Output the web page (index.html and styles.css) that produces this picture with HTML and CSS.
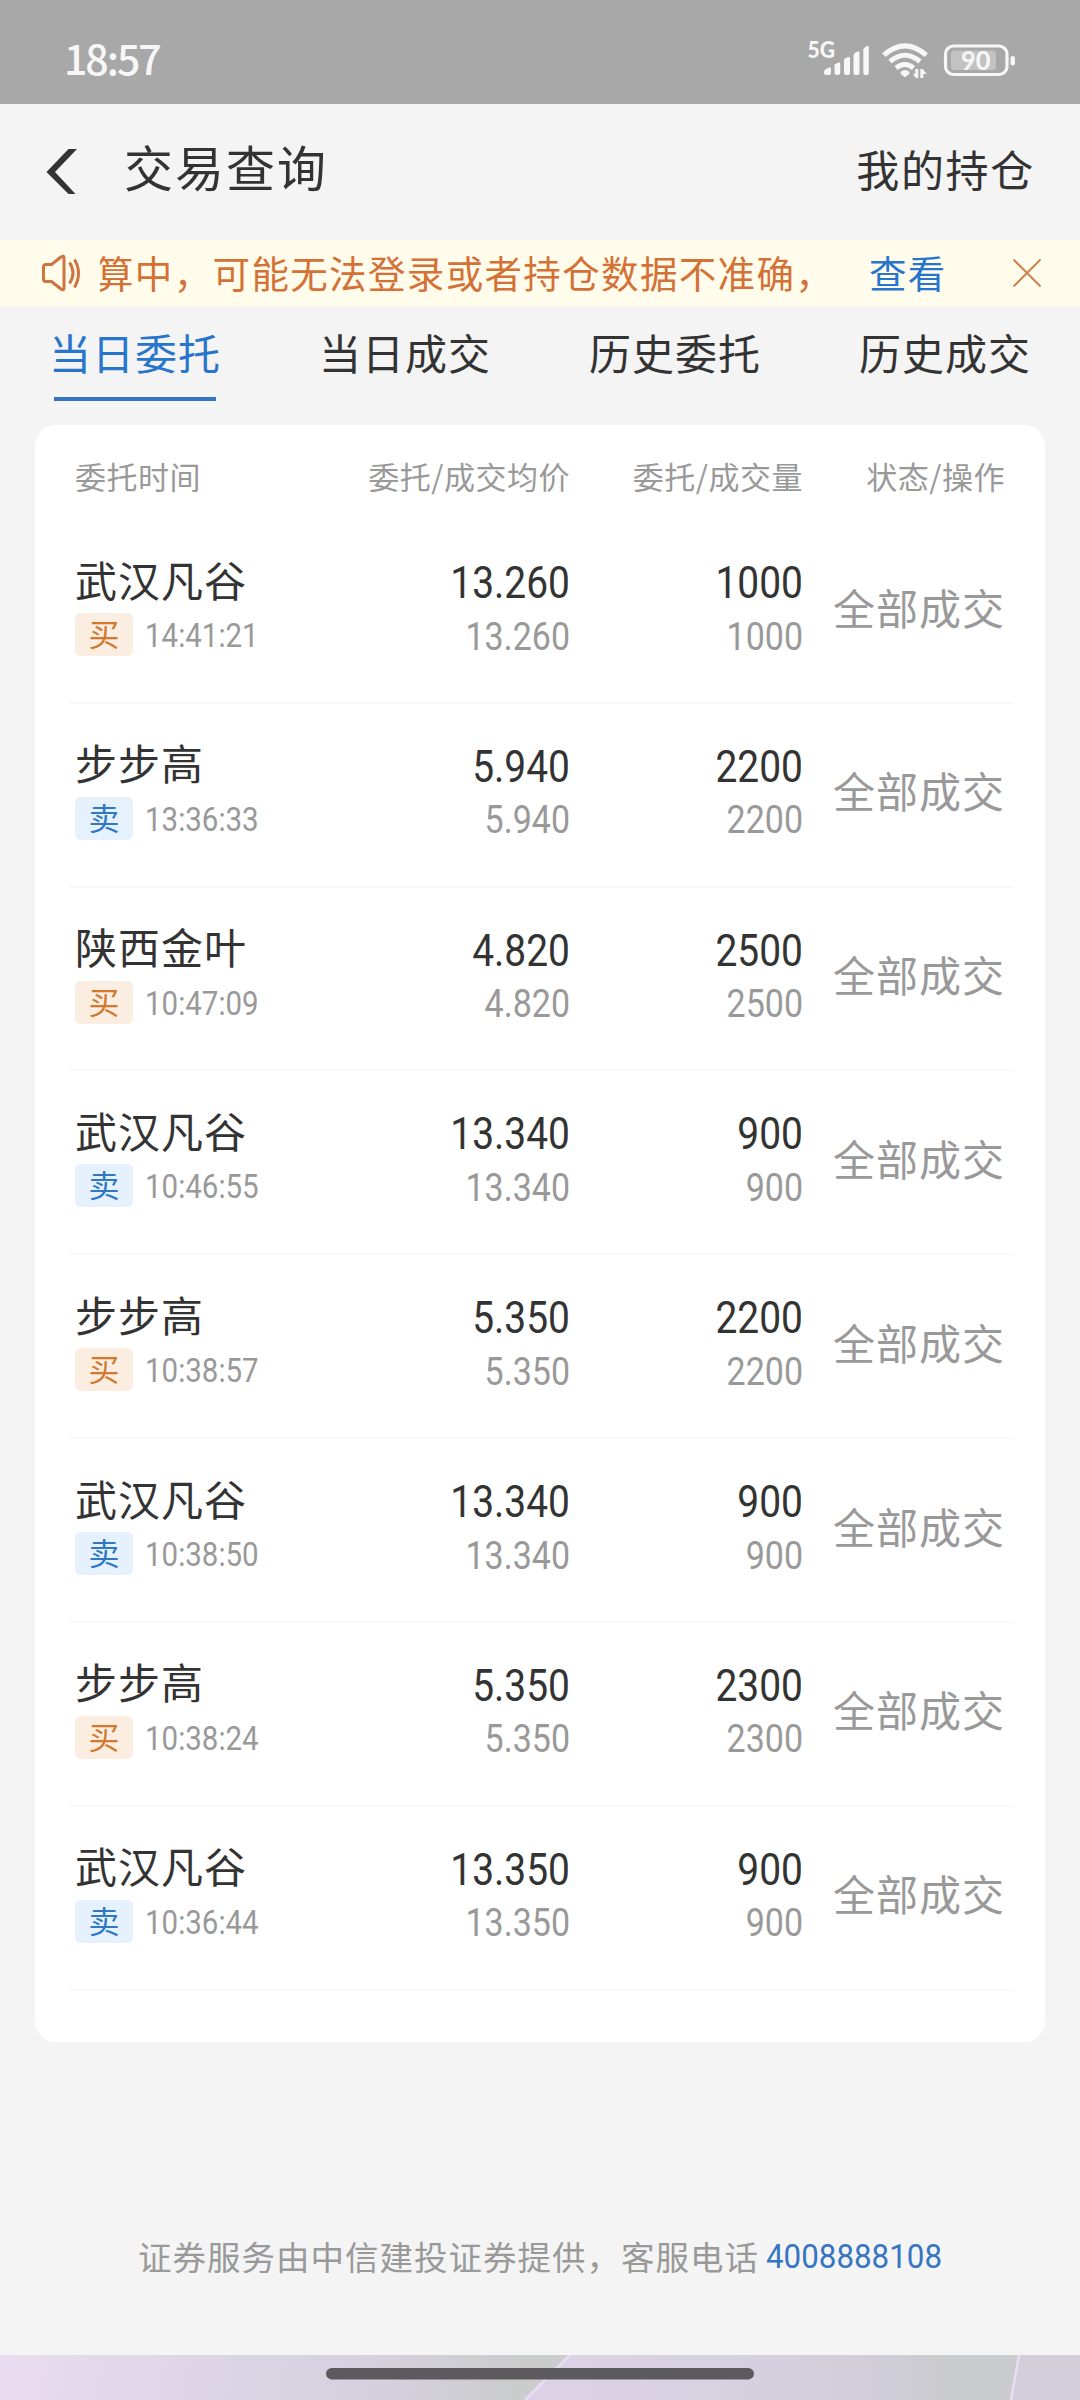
FILE: index.html
```html
<!DOCTYPE html>
<html lang="zh-CN">
<head>
<meta charset="utf-8">
<title>交易查询</title>
<link rel="stylesheet" href="styles.css">
</head>
<body>
<div class="statusbar">
  <span class="clock">18:57</span>
  <svg class="status-icons" width="216" height="50" viewBox="0 0 216 50" fill="#f7f7f7">
    <text class="net" x="1.5" y="22" textLength="27.500" lengthAdjust="spacingAndGlyphs">5G</text>
    <path d="M18 36q0-2 2-3l3-1.500q2-.5 2 1V37q0 2-2 2h-3q-2 0-2-2z"/>
    <path d="M28.500 29.500q0-1.500 2-2l2-1q1.700-.5 1.700 1V37q0 2-2 2h-1.700q-2 0-2-2z"/>
    <path d="M38 24q0-1.500 2-2l2-1q2-.5 2 1V37q0 2-2 2h-2q-2 0-2-2z"/>
    <path d="M47.500 19q0-1.500 2-2.500l2-1q2-.5 2 1V37q0 2-2 2h-2q-2 0-2-2z"/>
    <path d="M57.300 13.500q0-1.500 2-2.500l1.500-1q2-.5 2 1V37q0 2-2 2h-1.500q-2 0-2-2z"/>
    <g fill="none" stroke="#f7f7f7" stroke-width="5">
      <path d="M77.800 19.200q21.200-18.500 42.400 0"/>
      <path d="M84 25.500q15-12.500 30 0"/>
      <path d="M90 32q9-7 17.500 0"/>
    </g>
    <path d="M94.500 36q4.500-4 9 0q.5 2-1.500 3l-3 2.300l-3-2.300q-2-1-1.500-3z"/>
    <path d="M112.300 33v9h-2.500l-3-4.500l2.500.5v-5zM114.300 42v-9h2.500l3.700 5h-3.200v4z"/>
    <rect x="139.500" y="10" width="61.500" height="28.500" rx="8" fill="none" stroke="#f7f7f7" stroke-width="3.200"/>
    <rect x="145" y="14.500" width="45" height="19.500" rx="3" fill="#c2c2c2"/>
    <rect x="204.500" y="20" width="4.500" height="9.500" rx="2.200"/>
    <text class="charge" x="155" y="34" textLength="29.500" lengthAdjust="spacingAndGlyphs">90</text>
  </svg>
</div>
<header class="navbar">
  <svg class="back" width="32" height="46" viewBox="0 0 32 46"><path d="M31 0H22.500L.500 23L22.500 45H29.500L9 23z" fill="#333"/></svg>
  <h1 class="title">交易查询</h1>
  <a class="holdings">我的持仓</a>
</header>
<div class="notice">
  <svg class="speaker" width="42" height="38" viewBox="0 0 42 38" fill="none" stroke="#cd7440" stroke-width="3" stroke-linejoin="round">
    <path d="M3.500 13q0-2.500 2.500-2.500h5.500L21 3q3-2 3 1v30q0 3-3 1L11.500 27.500H6q-2.500 0-2.500-2.500z"/>
    <path d="M29.500 8.500q7 10.500 0 21M34.500 5.500q8 13.500 0 28"/>
  </svg>
  <div class="ticker"><span class="ticker-text">算中，可能无法登录或者持仓数据不准确，</span></div>
  <a class="view">查看</a>
  <svg class="close" width="28" height="28" viewBox="0 0 28 28"><path d="M.500.500l27 27M27.500.500l-27 27" stroke="#cd8250" stroke-width="2"/></svg>
</div>
<nav class="tabs">
  <a class="tab active">当日委托</a>
  <a class="tab">当日成交</a>
  <a class="tab">历史委托</a>
  <a class="tab">历史成交</a>
</nav>
<main class="card">
  <div class="head">
    <span class="h-time">委托时间</span><span>委托/成交均价</span><span>委托/成交量</span><span class="h-state">状态/操作</span>
  </div>
  <div class="row">
    <div class="stock"><div class="name">武汉凡谷</div><div class="meta"><span class="badge buy">买</span><span class="time">14:41:21</span></div></div>
    <div class="num"><b>13.260</b><i>13.260</i></div><div class="num"><b>1000</b><i>1000</i></div><div class="state">全部成交</div>
  </div>
  <div class="row">
    <div class="stock"><div class="name">步步高</div><div class="meta"><span class="badge sell">卖</span><span class="time">13:36:33</span></div></div>
    <div class="num"><b>5.940</b><i>5.940</i></div><div class="num"><b>2200</b><i>2200</i></div><div class="state">全部成交</div>
  </div>
  <div class="row">
    <div class="stock"><div class="name">陕西金叶</div><div class="meta"><span class="badge buy">买</span><span class="time">10:47:09</span></div></div>
    <div class="num"><b>4.820</b><i>4.820</i></div><div class="num"><b>2500</b><i>2500</i></div><div class="state">全部成交</div>
  </div>
  <div class="row">
    <div class="stock"><div class="name">武汉凡谷</div><div class="meta"><span class="badge sell">卖</span><span class="time">10:46:55</span></div></div>
    <div class="num"><b>13.340</b><i>13.340</i></div><div class="num"><b>900</b><i>900</i></div><div class="state">全部成交</div>
  </div>
  <div class="row">
    <div class="stock"><div class="name">步步高</div><div class="meta"><span class="badge buy">买</span><span class="time">10:38:57</span></div></div>
    <div class="num"><b>5.350</b><i>5.350</i></div><div class="num"><b>2200</b><i>2200</i></div><div class="state">全部成交</div>
  </div>
  <div class="row">
    <div class="stock"><div class="name">武汉凡谷</div><div class="meta"><span class="badge sell">卖</span><span class="time">10:38:50</span></div></div>
    <div class="num"><b>13.340</b><i>13.340</i></div><div class="num"><b>900</b><i>900</i></div><div class="state">全部成交</div>
  </div>
  <div class="row">
    <div class="stock"><div class="name">步步高</div><div class="meta"><span class="badge buy">买</span><span class="time">10:38:24</span></div></div>
    <div class="num"><b>5.350</b><i>5.350</i></div><div class="num"><b>2300</b><i>2300</i></div><div class="state">全部成交</div>
  </div>
  <div class="row">
    <div class="stock"><div class="name">武汉凡谷</div><div class="meta"><span class="badge sell">卖</span><span class="time">10:36:44</span></div></div>
    <div class="num"><b>13.350</b><i>13.350</i></div><div class="num"><b>900</b><i>900</i></div><div class="state">全部成交</div>
  </div>
</main>
<footer class="service"><span>证券服务由中信建投证券提供，客服电话</span><a class="phone">4008888108</a></footer>
<div class="gesture">
  <svg class="wallpaper" width="1080" height="45" viewBox="0 0 1080 45">
    <defs>
      <linearGradient id="g1" x1="0" y1="0" x2="550" y2="100" gradientUnits="userSpaceOnUse"><stop offset="0" stop-color="#eadcf0"/><stop offset=".35" stop-color="#ddd5e6"/><stop offset=".7" stop-color="#d4d0dc"/><stop offset=".92" stop-color="#cbcccc"/></linearGradient>
      <linearGradient id="g2" x1="540" y1="0" x2="1020" y2="0" gradientUnits="userSpaceOnUse"><stop offset="0" stop-color="#dcd2e6"/><stop offset=".4" stop-color="#d7d1df"/><stop offset=".7" stop-color="#d0cdd8"/><stop offset=".9" stop-color="#c9cbcc"/></linearGradient>
    </defs>
    <path d="M0 0H570L525 45H0z" fill="url(#g1)"/>
    <path d="M570 0H1019L1011 45H525z" fill="url(#g2)"/>
    <path d="M1019 0H1080V45H1011z" fill="#d1ced9"/>
    <path d="M570 0L525 45M1019 0L1011 45" fill="none" stroke="#eadcf5" stroke-width="2.500"/>
    <rect x="326" y="13" width="428" height="11.500" rx="5.700" fill="#5c5a5f"/>
  </svg>
</div>
</body>
</html>
```

FILE: styles.css
```css
* { box-sizing: border-box; }
body {
  margin: 0;
  width: 1080px;
  height: 2400px;
  display: flex;
  flex-direction: column;
  background: #f4f4f4;
  color: #333;
  font-family: "Noto Sans CJK SC", sans-serif;
  overflow: hidden;
}
svg { display: block; flex: none; }

.statusbar {
  flex: none;
  height: 104px;
  padding: 0 58px 0 64px;
  display: flex;
  justify-content: space-between;
  align-items: flex-start;
  background: #a8a8a8;
  color: #f7f7f7;
}
.clock { margin-top: 32px; font: 500 41px/50px "Noto Sans CJK SC", sans-serif; letter-spacing: -2px; }
.status-icons { margin-top: 36px; }
.net { font: 900 22.5px Lato, sans-serif; }
.charge { font: 700 26px Lato, sans-serif; }

.navbar {
  flex: none;
  height: 136px;
  padding: 0 45px 0 46px;
  display: flex;
  align-items: flex-start;
}
.back { margin-top: 45px; }
.title {
  margin: 27px 0 0 46px;
  font-size: 49px;
  line-height: 70px;
  font-weight: 400;
  letter-spacing: 2px;
}
.holdings { margin: 31px 0 0 auto; font-size: 43px; line-height: 66px; letter-spacing: 1.7px; }

.notice {
  flex: none;
  height: 66px;
  padding: 0 39px 0 40px;
  display: flex;
  align-items: center;
  background: #fffcec;
  color: #d37136;
  font-size: 37.5px;
  line-height: 62px;
  letter-spacing: 1.35px;
}
.notice .ticker, .notice .view { padding-bottom: 3px; }
.ticker { width: 738px; margin-left: 18px; overflow: hidden; white-space: nowrap; }
.ticker-text { margin-left: -4px; }
.view { margin-left: 31px; color: #2875cc; }
.close { margin-left: auto; }

.tabs { flex: none; height: 119px; display: grid; grid-template-columns: repeat(4, 1fr); }
.tab {
  display: flex;
  flex-direction: column;
  align-items: center;
  padding-top: 15px;
  font-size: 42px;
  line-height: 62px;
  letter-spacing: 1px;
}
.active { color: #2875cc; }
.active::after { content: ""; width: 162px; height: 4px; margin-top: 14px; background: #3375c2; }

.card {
  flex: none;
  height: 1617px;
  margin: 0 35px;
  padding: 0 33px 0 34px;
  background: #fff;
  border-radius: 21px;
}
.head, .row { display: grid; grid-template-columns: 250px 251px 233px 202px; }
.head {
  height: 95px;
  padding-top: 30px;
  color: #999;
  font-size: 31px;
  line-height: 42px;
  letter-spacing: .5px;
  text-align: right;
}
.h-time { padding-left: 6px; text-align: left; }
.row { height: 183.84px; margin-right: -1px; border-bottom: 2px solid #f8f8f8; }
.stock { padding: 33.5px 0 0 6px; }
.name { font-size: 42px; line-height: 50px; letter-spacing: 1px; }
.meta { display: flex; align-items: center; margin-top: 9.5px; }
.badge {
  width: 58px;
  height: 43px;
  border-radius: 6px;
  text-align: center;
  font-size: 31px;
  line-height: 40px;
}
.buy { background: #fcede1; color: #cf7a30; }
.sell { background: #e6f1fe; color: #2f78c4; }
.time {
  margin: 3px 0 0 12px;
  font: 400 32.5px/40px Roboto, sans-serif;
  color: #999;
  transform: scaleX(.907);
  transform-origin: left;
}
.num {
  padding-top: 37px;
  display: flex;
  flex-direction: column;
  align-items: flex-end;
  font-family: Roboto, sans-serif;
  line-height: 53.5px;
  transform: scaleX(.895);
  transform-origin: right;
}
.num b { font-weight: 400; font-size: 43.5px; }
.num i { font-style: normal; font-size: 38px; color: #999; }
.state { padding-top: 61.5px; color: #999; font-size: 42px; line-height: 50px; letter-spacing: 1px; text-align: right; white-space: nowrap; }

.service {
  flex: none;
  margin-top: 188px;
  padding-left: 138px;
  display: flex;
  align-items: center;
  height: 52px;
  color: #999;
  font-size: 33.5px;
  line-height: 52px;
  letter-spacing: 1px;
}
.phone {
  margin: 2px 0 0 7px;
  color: #3576c2;
  font: 400 33.5px/52px Roboto, sans-serif;
  letter-spacing: 0;
  transform: scaleX(.935);
  transform-origin: left;
}
.gesture { height: 45px; margin-top: auto; }
```
